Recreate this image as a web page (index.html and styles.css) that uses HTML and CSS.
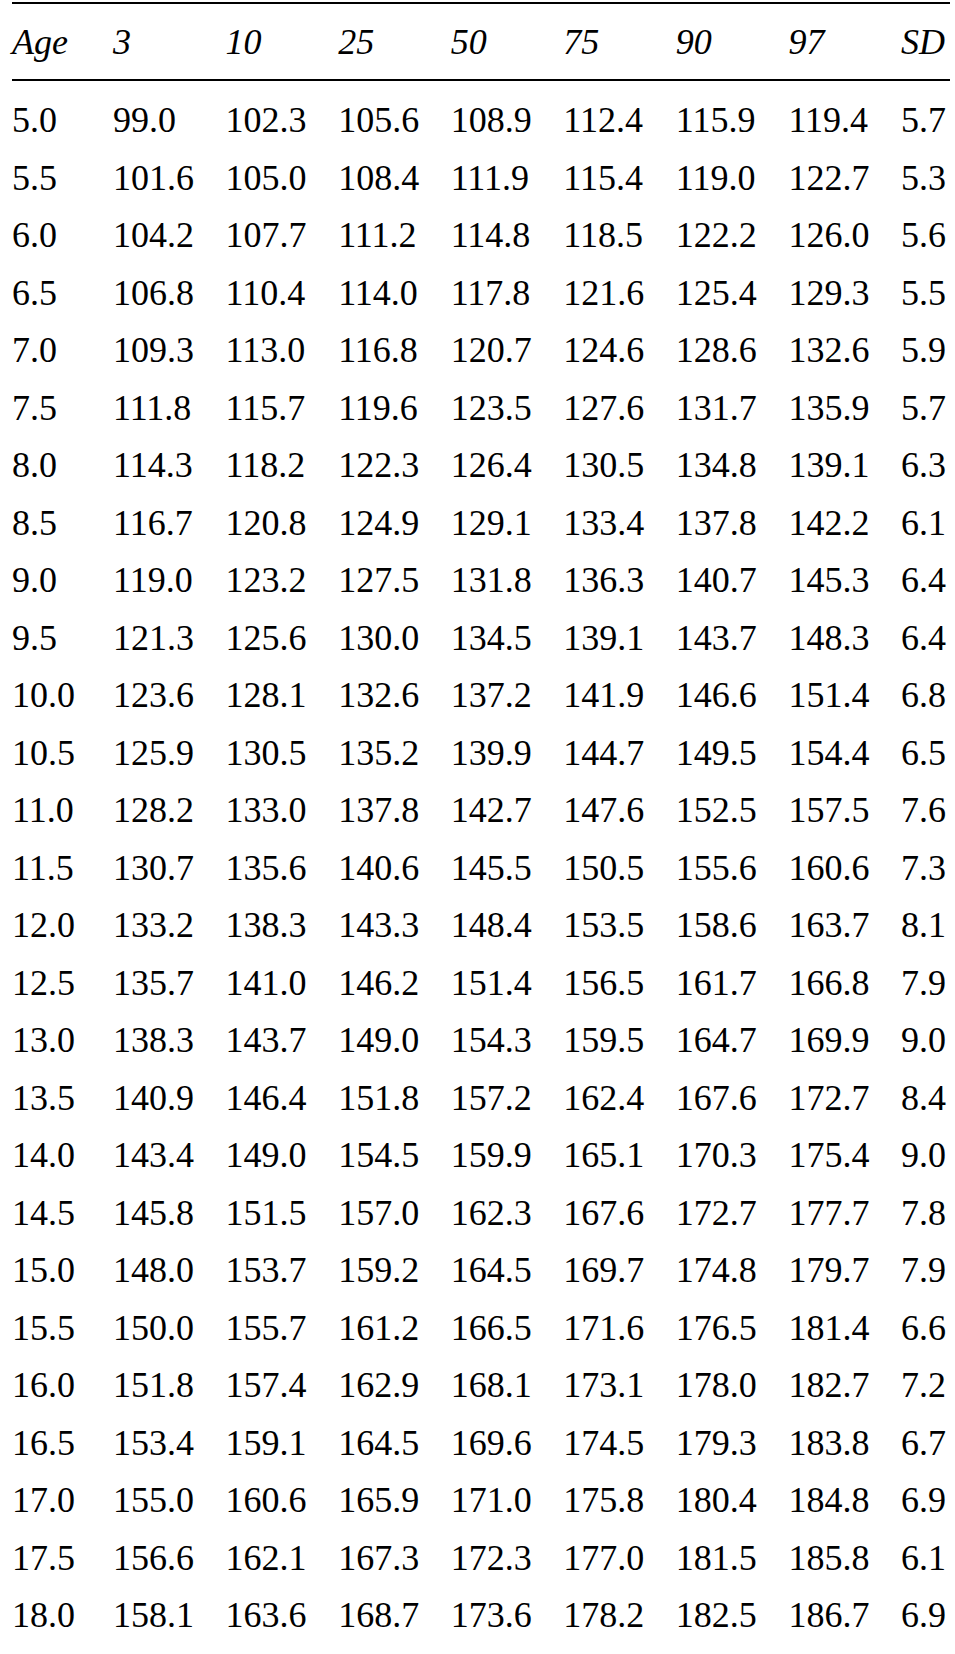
FILE: index.html
```html
<!DOCTYPE html>
<html lang="en">
<head>
<meta charset="utf-8">
<title>Height percentiles</title>
<link rel="stylesheet" href="styles.css">
</head>
<body>
<table class="pct-table">
  <colgroup>
    <col class="col-age">
    <col class="col-p"><col class="col-p"><col class="col-p"><col class="col-p">
    <col class="col-p"><col class="col-p"><col class="col-p">
    <col class="col-sd">
  </colgroup>
  <thead>
    <tr><th>Age</th><th>3</th><th>10</th><th>25</th><th>50</th><th>75</th><th>90</th><th>97</th><th>SD</th></tr>
  </thead>
  <tbody>
    <tr><td>5.0</td><td>99.0</td><td>102.3</td><td>105.6</td><td>108.9</td><td>112.4</td><td>115.9</td><td>119.4</td><td>5.7</td></tr>
    <tr><td>5.5</td><td>101.6</td><td>105.0</td><td>108.4</td><td>111.9</td><td>115.4</td><td>119.0</td><td>122.7</td><td>5.3</td></tr>
    <tr><td>6.0</td><td>104.2</td><td>107.7</td><td>111.2</td><td>114.8</td><td>118.5</td><td>122.2</td><td>126.0</td><td>5.6</td></tr>
    <tr><td>6.5</td><td>106.8</td><td>110.4</td><td>114.0</td><td>117.8</td><td>121.6</td><td>125.4</td><td>129.3</td><td>5.5</td></tr>
    <tr><td>7.0</td><td>109.3</td><td>113.0</td><td>116.8</td><td>120.7</td><td>124.6</td><td>128.6</td><td>132.6</td><td>5.9</td></tr>
    <tr><td>7.5</td><td>111.8</td><td>115.7</td><td>119.6</td><td>123.5</td><td>127.6</td><td>131.7</td><td>135.9</td><td>5.7</td></tr>
    <tr><td>8.0</td><td>114.3</td><td>118.2</td><td>122.3</td><td>126.4</td><td>130.5</td><td>134.8</td><td>139.1</td><td>6.3</td></tr>
    <tr><td>8.5</td><td>116.7</td><td>120.8</td><td>124.9</td><td>129.1</td><td>133.4</td><td>137.8</td><td>142.2</td><td>6.1</td></tr>
    <tr><td>9.0</td><td>119.0</td><td>123.2</td><td>127.5</td><td>131.8</td><td>136.3</td><td>140.7</td><td>145.3</td><td>6.4</td></tr>
    <tr><td>9.5</td><td>121.3</td><td>125.6</td><td>130.0</td><td>134.5</td><td>139.1</td><td>143.7</td><td>148.3</td><td>6.4</td></tr>
    <tr><td>10.0</td><td>123.6</td><td>128.1</td><td>132.6</td><td>137.2</td><td>141.9</td><td>146.6</td><td>151.4</td><td>6.8</td></tr>
    <tr><td>10.5</td><td>125.9</td><td>130.5</td><td>135.2</td><td>139.9</td><td>144.7</td><td>149.5</td><td>154.4</td><td>6.5</td></tr>
    <tr><td>11.0</td><td>128.2</td><td>133.0</td><td>137.8</td><td>142.7</td><td>147.6</td><td>152.5</td><td>157.5</td><td>7.6</td></tr>
    <tr><td>11.5</td><td>130.7</td><td>135.6</td><td>140.6</td><td>145.5</td><td>150.5</td><td>155.6</td><td>160.6</td><td>7.3</td></tr>
    <tr><td>12.0</td><td>133.2</td><td>138.3</td><td>143.3</td><td>148.4</td><td>153.5</td><td>158.6</td><td>163.7</td><td>8.1</td></tr>
    <tr><td>12.5</td><td>135.7</td><td>141.0</td><td>146.2</td><td>151.4</td><td>156.5</td><td>161.7</td><td>166.8</td><td>7.9</td></tr>
    <tr><td>13.0</td><td>138.3</td><td>143.7</td><td>149.0</td><td>154.3</td><td>159.5</td><td>164.7</td><td>169.9</td><td>9.0</td></tr>
    <tr><td>13.5</td><td>140.9</td><td>146.4</td><td>151.8</td><td>157.2</td><td>162.4</td><td>167.6</td><td>172.7</td><td>8.4</td></tr>
    <tr><td>14.0</td><td>143.4</td><td>149.0</td><td>154.5</td><td>159.9</td><td>165.1</td><td>170.3</td><td>175.4</td><td>9.0</td></tr>
    <tr><td>14.5</td><td>145.8</td><td>151.5</td><td>157.0</td><td>162.3</td><td>167.6</td><td>172.7</td><td>177.7</td><td>7.8</td></tr>
    <tr><td>15.0</td><td>148.0</td><td>153.7</td><td>159.2</td><td>164.5</td><td>169.7</td><td>174.8</td><td>179.7</td><td>7.9</td></tr>
    <tr><td>15.5</td><td>150.0</td><td>155.7</td><td>161.2</td><td>166.5</td><td>171.6</td><td>176.5</td><td>181.4</td><td>6.6</td></tr>
    <tr><td>16.0</td><td>151.8</td><td>157.4</td><td>162.9</td><td>168.1</td><td>173.1</td><td>178.0</td><td>182.7</td><td>7.2</td></tr>
    <tr><td>16.5</td><td>153.4</td><td>159.1</td><td>164.5</td><td>169.6</td><td>174.5</td><td>179.3</td><td>183.8</td><td>6.7</td></tr>
    <tr><td>17.0</td><td>155.0</td><td>160.6</td><td>165.9</td><td>171.0</td><td>175.8</td><td>180.4</td><td>184.8</td><td>6.9</td></tr>
    <tr><td>17.5</td><td>156.6</td><td>162.1</td><td>167.3</td><td>172.3</td><td>177.0</td><td>181.5</td><td>185.8</td><td>6.1</td></tr>
    <tr><td>18.0</td><td>158.1</td><td>163.6</td><td>168.7</td><td>173.6</td><td>178.2</td><td>182.5</td><td>186.7</td><td>6.9</td></tr>
  </tbody>
</table>
</body>
</html>
```

FILE: styles.css
```css
html, body {
  margin: 0;
  padding: 0;
  background: #ffffff;
}

body {
  padding: 2px 0 0 12px;
  font-family: "Liberation Serif", "Times New Roman", serif;
  color: #000000;
}

.pct-table {
  width: 938px;
  table-layout: fixed;
  border-collapse: collapse;
  border-spacing: 0;
  font-size: 36px;
  line-height: 57.5px;
}

.col-age { width: 101px; }
.col-p { width: 112.57px; }
.col-sd { width: 49px; }

.pct-table th,
.pct-table td {
  padding: 0;
  text-align: left;
  vertical-align: baseline;
  white-space: nowrap;
}

.pct-table thead tr {
  border-top: 2px solid #000;
  border-bottom: 2px solid #000;
}

.pct-table th {
  font-weight: normal;
  font-style: italic;
  padding-top: 10px;
  padding-bottom: 7.5px;
}

.pct-table tbody tr:first-child td {
  padding-top: 11px;
}
```
